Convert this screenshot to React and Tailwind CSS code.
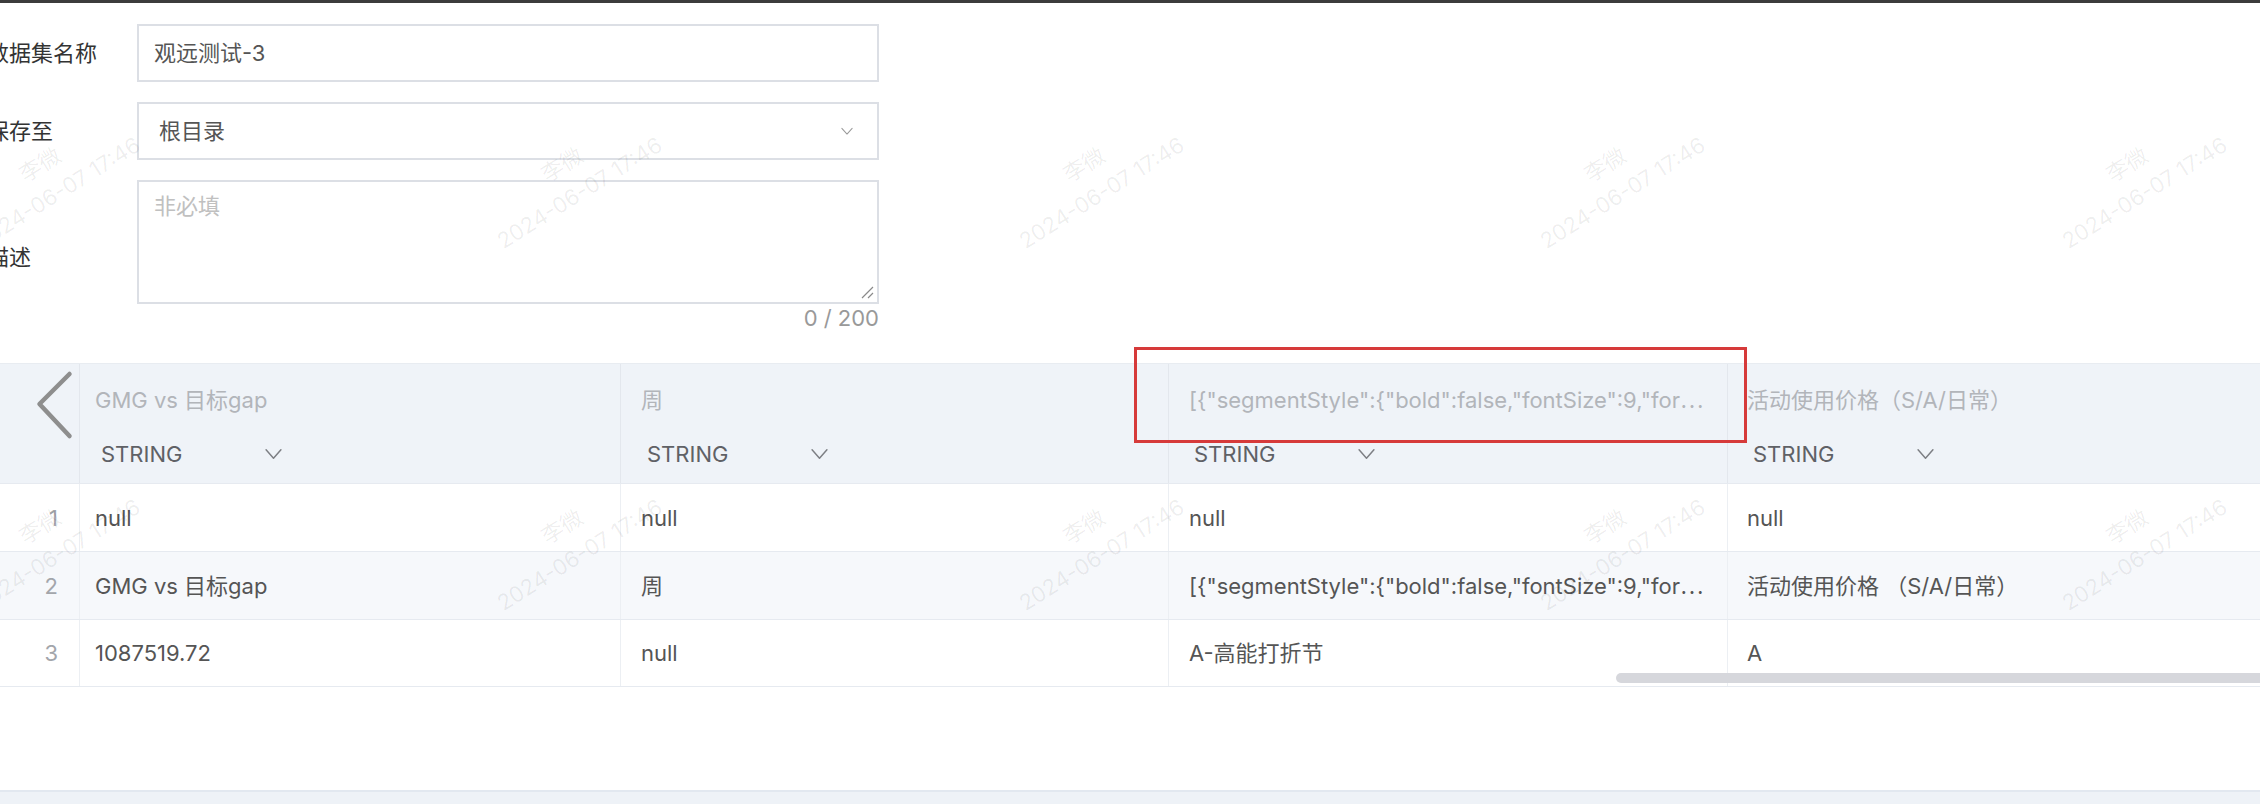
import React from "react";

const COLS = [
  { w: "w-[541px]", pl: "pl-[15px]", spl: "pl-[21px]" },
  { w: "w-[548px]", pl: "pl-[20px]", spl: "pl-[26px]" },
  { w: "w-[559px]", pl: "pl-[20px]", spl: "pl-[25px]" },
  { w: "w-[533px]", pl: "pl-[19px]", spl: "pl-[25px]" },
];

const SEG = '[{"segmentStyle":{"bold":false,"fontSize":9,"for⋯';

const HEAD = ["GMG vs 目标gap", "周", SEG, "活动使用价格（S/A/日常）"];

const ROWS = [
  ["null", "null", "null", "null"],
  ["GMG vs 目标gap", "周", SEG, "活动使用价格 （S/A/日常）"],
  ["1087519.72", "null", "A-高能打折节", "A"],
];

function Chevron({ className }) {
  return (
    <svg className={className} viewBox="0 0 20 14" fill="none">
      <path d="M2 2 L10 11 L18 2" stroke="currentColor" strokeWidth="1.6" strokeLinecap="round" strokeLinejoin="round" />
    </svg>
  );
}

function Watermarks() {
  const xs = [40, 562, 1084, 1605, 2127];
  const ys = [165, 527];
  const items = [];
  ys.forEach((y) =>
    xs.forEach((x) => {
      items.push({ cx: x + 9, cy: y + 14, k: `${x}-${y}` });
    })
  );
  return items.map((it) => (
    <div
      key={it.k}
      className="pointer-events-none absolute flex h-[80px] w-[260px] rotate-[-32deg] flex-col items-center justify-center text-[22px] leading-[33px] text-black/[0.07] whitespace-nowrap"
      style={{ left: it.cx - 130, top: it.cy - 40 }}
    >
      <span>李微</span>
      <span>2024-06-07 17:46</span>
    </div>
  ));
}

export default function App() {
  return (
    <div className="relative flex h-[804px] w-[2260px] flex-col overflow-hidden bg-white font-[family-name:Inter,'Noto_Sans_CJK_SC',sans-serif] text-[22px] leading-[22px] text-[#555]">
      <div className="h-[3px] shrink-0 bg-[#3c3c3c]" />

      {/* form */}
      <div className="ml-[-13px] flex shrink-0 flex-col gap-[20px] pt-[21px]">
        <div className="flex items-center">
          <div className="w-[150px] shrink-0 text-[#333]">数据集名称</div>
          <div className="flex h-[58px] w-[742px] items-center border-2 border-[#dcdfe5] px-[15px] text-[#555]">
            观远测试-3
          </div>
        </div>
        <div className="flex items-center">
          <div className="w-[150px] shrink-0 text-[#333]">保存至</div>
          <div className="flex h-[58px] w-[742px] items-center justify-between border-2 border-[#dcdfe5] pl-[20px] pr-[23px] text-[#555]">
            <span>根目录</span>
            <Chevron className="h-[9px] w-[14px] text-[#9a9a9a]" />
          </div>
        </div>
        <div className="flex items-center">
          <div className="w-[150px] shrink-0 text-[#333]">描述</div>
          <div className="flex w-[742px] flex-col">
            <div className="relative h-[124px] border-2 border-[#dcdfe5] px-[15px] pt-[13px] text-[#c0c0c0]">
              非必填
              <svg className="absolute bottom-[3px] right-[3px] h-[14px] w-[14px]" viewBox="0 0 14 14" fill="none">
                <path d="M13 2 L2 13 M13 8 L8 13" stroke="#8a8a8a" strokeWidth="1.2" />
              </svg>
            </div>
            <div className="mt-[3px] h-[26px] text-right text-[#999]">0 / 200</div>
          </div>
        </div>
      </div>

      {/* table */}
      <div className="mt-[30px] flex shrink-0 flex-col">
        <div className="flex h-[120px] border-t border-[#e8ecf1] bg-[#eff3f8]">
          <div className="relative w-[79px] shrink-0">
            <svg className="absolute left-0 top-0 h-[80px] w-[79px]" viewBox="0 0 79 80" fill="none">
              <path d="M69.5 10 L39.5 40 L69.5 72" stroke="#8e8e8e" strokeWidth="4.5" strokeLinecap="round" strokeLinejoin="round" />
            </svg>
          </div>
          {COLS.map((c, i) => (
            <div key={i} className={`${c.w} shrink-0 border-l border-[#e3e7ed] flex flex-col pt-[25px] gap-[32px] overflow-hidden`}>
              <div className={`${c.pl} whitespace-nowrap text-[#b2b5ba]`}>{HEAD[i]}</div>
              <div className={`${c.spl} flex items-center`}>
                <div className="flex w-[182px] items-center justify-between text-[#5f6166]">
                  <span>STRING</span>
                  <Chevron className="h-[13px] w-[19px] text-[#7d7f84]" />
                </div>
              </div>
            </div>
          ))}
        </div>

        {ROWS.map((r, ri) => (
          <div
            key={ri}
            className={`flex h-[68px] border-t border-[#e6eaf0] ${ri === 1 ? "bg-[#f6f8fb]" : "bg-white"} ${ri === 2 ? "border-b" : ""}`}
          >
            <div className="flex w-[79px] shrink-0 items-center justify-end pr-[21px] text-[#a3a6ab]">{ri + 1}</div>
            {COLS.map((c, i) => (
              <div key={i} className={`${c.w} ${c.pl} flex shrink-0 items-center overflow-hidden whitespace-nowrap border-l border-[#eceff3] text-[#555]`}>
                {r[i]}
              </div>
            ))}
          </div>
        ))}
      </div>

      <div className="mt-auto h-[14px] shrink-0 border-t-2 border-[#e2e8f0] bg-[#eef2f7]" />

      {/* horizontal scrollbar thumb */}
      <div className="absolute left-[1616px] top-[673px] h-[10px] w-[660px] rounded-full bg-[#d6d7dc]" />

      {/* highlight box */}
      <div className="pointer-events-none absolute left-[1134px] top-[347px] h-[96px] w-[613px] border-[3px] border-[#d63a3a]" />

      <Watermarks />
    </div>
  );
}
